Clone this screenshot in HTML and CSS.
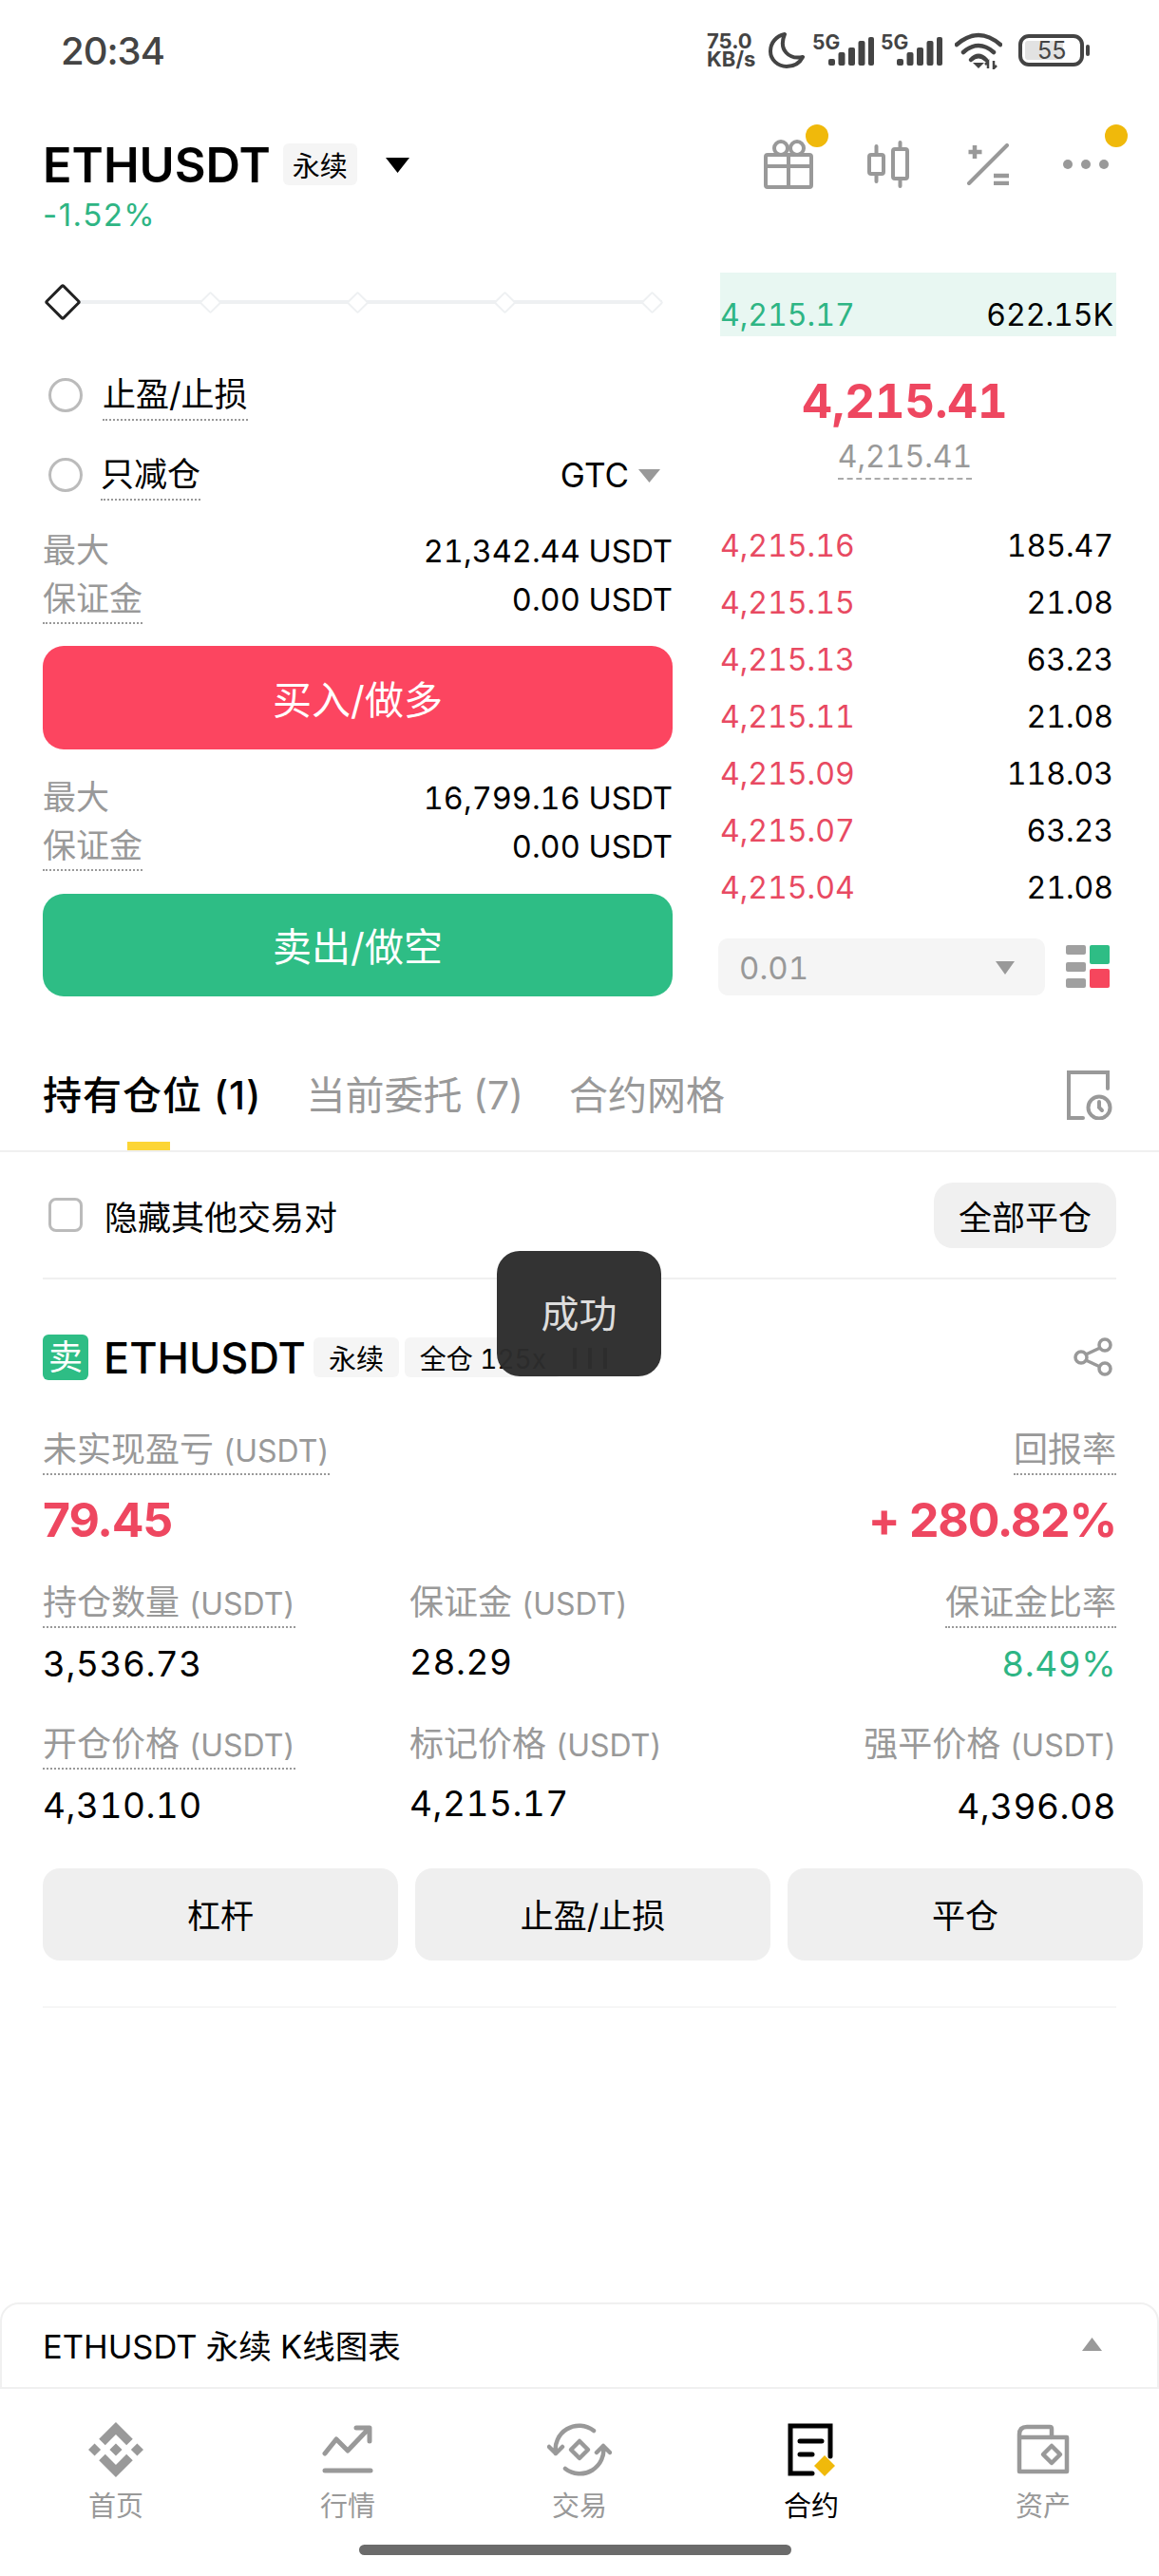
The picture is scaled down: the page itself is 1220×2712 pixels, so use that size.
FILE: index.html
```html
<!DOCTYPE html>
<html lang="zh">
<head>
<meta charset="utf-8">
<title>ETHUSDT 永续</title>
<link rel="stylesheet" href="styles.css">
</head>
<body>
<div class="app">
  <header class="status">
    <span class="clock">20:34</span>
    <div class="sys">
      <div class="speed"><span>75.0</span><span>KB/s</span></div>
      <svg class="moon" width="38" height="40" viewBox="0 0 38 40"><path d="M17 3C8 5 2 12 2 21c0 9 8 16 17 16 8 0 14-4 17-10C22 30 10 20 17 3Z" fill="none" stroke="#444" stroke-width="4" stroke-linejoin="round"/></svg>
      <svg class="sig1" width="66" height="46" viewBox="0 -6 66 46"><text x="0" y="16" class="five">5G</text><g fill="#444"><rect x="17" y="26" width="7" height="7" rx="2"/><rect x="27.500" y="19" width="7" height="14" rx="2"/><rect x="38" y="14" width="7" height="19" rx="2"/><rect x="48.500" y="7" width="7" height="26" rx="2"/><rect x="59" y="3" width="6" height="30" rx="2"/></g></svg>
      <svg class="sig2" width="66" height="46" viewBox="0 -6 66 46"><text x="0" y="16" class="five">5G</text><g fill="#444"><rect x="17" y="26" width="7" height="7" rx="2"/><rect x="27.500" y="19" width="7" height="14" rx="2"/><rect x="38" y="14" width="7" height="19" rx="2"/><rect x="48.500" y="7" width="7" height="26" rx="2"/><rect x="59" y="3" width="6" height="30" rx="2"/></g></svg>
      <svg class="wifi" width="50" height="40" viewBox="0 0 50 40"><g fill="none" stroke="#444" stroke-width="4.500" stroke-linecap="round"><path d="M2 14Q25-6 48 14"/><path d="M9 22Q25 8 41 22"/><path d="M17 30Q25 22 33 30"/></g><path d="M19 33h12l-6 6z" fill="#444"/><path d="M35 39v-7l-3 3M41 31v8l3-3" fill="none" stroke="#444" stroke-width="2.500"/></svg>
      <svg class="batt" width="76" height="34" viewBox="0 0 76 34"><rect x="2" y="2" width="65" height="30" rx="9" fill="#fff" stroke="#444" stroke-width="4"/><rect x="7" y="7" width="40" height="20" rx="3" fill="#e2e2e2"/><rect x="71" y="11" width="4" height="12" rx="2" fill="#444"/><text x="20" y="26" class="pct">55</text></svg>
    </div>
  </header>

  <section class="head">
    <div class="head-left">
      <div class="title-row">
        <span class="pair">ETHUSDT</span>
        <span class="tag tag-head">永续</span>
        <svg class="caret-black" width="27" height="17" viewBox="0 0 27 17"><path d="M1 1h25L13.500 17z" fill="#000"/></svg>
      </div>
      <div class="change">-1.52%</div>
    </div>
    <div class="tools">
      <div class="tool tool-gift">
        <svg width="52" height="52" viewBox="0 0 52 52" fill="none" stroke="#999" stroke-width="4"><rect x="2" y="16" width="48" height="34" rx="2"/><path d="M2 28h48M26 16v34"/><circle cx="18" cy="9" r="7"/><circle cx="35" cy="9" r="7"/></svg>
        <span class="badge"></span>
      </div>
      <div class="tool tool-candle">
        <svg width="44" height="50" viewBox="0 0 44 50" fill="none" stroke="#999" stroke-width="4" stroke-linecap="round"><rect x="2" y="15" width="15" height="20" rx="2"/><path d="M9.500 6v9M9.500 35v8"/><rect x="27" y="9" width="15" height="31" rx="2"/><path d="M34.500 2v7M34.500 40v8"/></svg>
      </div>
      <div class="tool tool-calc">
        <svg width="44" height="44" viewBox="0 0 44 44" fill="none" stroke="#999" stroke-linecap="round"><path d="M2 42L42 2" stroke-width="4"/><path d="M8 2v14M1.500 9h14" stroke-width="4.500" stroke-linecap="butt"/><path d="M28 34h16M28 42h16" stroke-width="4.500" stroke-linecap="butt"/></svg>
      </div>
      <div class="tool tool-more">
        <svg width="50" height="10" viewBox="0 0 50 10" fill="#999"><circle cx="5" cy="5" r="5"/><circle cx="24" cy="5" r="5"/><circle cx="43" cy="5" r="5"/></svg>
        <span class="badge"></span>
      </div>
    </div>
  </section>

  <section class="trade">
    <div class="form">
      <div class="slider">
        <span class="tick"><i class="dia dia-on"></i></span>
        <span class="tick"><i class="dia"></i></span>
        <span class="tick"><i class="dia"></i></span>
        <span class="tick"><i class="dia"></i></span>
        <span class="tick"><i class="dia"></i></span>
      </div>
      <div class="opt opt-tp"><i class="radio"></i><span class="dot-label">止盈/止损</span></div>
      <div class="opt opt-ro"><i class="radio"></i><span class="dot-label dot-tight">只减仓</span>
        <span class="gtc">GTC<svg width="23" height="14" viewBox="0 0 23 14"><path d="M0 0h23L11.500 14z" fill="#999"/></svg></span>
      </div>
      <div class="limits limits-buy">
        <div class="limit"><span class="muted">最大</span><span class="amount">21,342.44 USDT</span></div>
        <div class="limit"><span class="muted under">保证金</span><span class="amount">0.00 USDT</span></div>
      </div>
      <button class="action buy">买入/做多</button>
      <div class="limits limits-sell">
        <div class="limit"><span class="muted">最大</span><span class="amount">16,799.16 USDT</span></div>
        <div class="limit"><span class="muted under">保证金</span><span class="amount">0.00 USDT</span></div>
      </div>
      <button class="action sell">卖出/做空</button>
    </div>

    <div class="book">
      <div class="bid-row"><span class="green">4,215.17</span><span>622.15K</span></div>
      <div class="last">4,215.41</div>
      <div class="mark-wrap"><span class="mark">4,215.41</span></div>
      <div class="asks">
        <div class="ask"><span class="red-soft">4,215.16</span><span>185.47</span></div>
        <div class="ask"><span class="red-soft">4,215.15</span><span>21.08</span></div>
        <div class="ask"><span class="red-soft">4,215.13</span><span>63.23</span></div>
        <div class="ask"><span class="red-soft">4,215.11</span><span>21.08</span></div>
        <div class="ask"><span class="red-soft">4,215.09</span><span>118.03</span></div>
        <div class="ask"><span class="red-soft">4,215.07</span><span>63.23</span></div>
        <div class="ask"><span class="red-soft">4,215.04</span><span>21.08</span></div>
      </div>
      <div class="depth">
        <div class="select"><span>0.01</span><svg width="20" height="14" viewBox="0 0 20 14"><path d="M0 0h20L10 14z" fill="#999"/></svg></div>
        <svg class="layout-ic" width="46" height="46" viewBox="0 0 46 46"><g fill="#a0a0a0"><rect x="0" y="0" width="21" height="10" rx="2"/><rect x="0" y="18" width="21" height="10" rx="2"/><rect x="0" y="35" width="21" height="10" rx="2"/></g><rect x="25" y="0" width="21" height="20" rx="2" fill="#2ebd85"/><rect x="25" y="25" width="21" height="20" rx="2" fill="#f6465d"/></svg>
      </div>
    </div>
  </section>

  <nav class="tabs">
    <span class="tab tab-on">持有仓位 (1)</span>
    <span class="tab">当前委托 (7)</span>
    <span class="tab">合约网格</span>
    <svg class="history" width="48" height="52" viewBox="0 0 48 52" fill="none" stroke="#999" stroke-width="4" stroke-linecap="round"><path d="M43 19V2H2v48h15"/><circle cx="34" cy="39" r="11.500"/><path d="M34 33v6l3 3"/></svg>
  </nav>

  <div class="filter">
    <div class="filter-left"><i class="check"></i><span>隐藏其他交易对</span></div>
    <button class="close-all">全部平仓</button>
  </div>

  <section class="position">
    <div class="pos-head">
      <span class="side">卖</span>
      <span class="pos-pair">ETHUSDT</span>
      <span class="tag">永续</span>
      <span class="tag tag-wide">全仓 125x</span>
      <svg class="adl" width="38" height="24" viewBox="0 0 38 24" fill="#3c3c3c"><rect x="0" y="2" width="4" height="22"/><rect x="16" y="2" width="4" height="22"/><rect x="32" y="2" width="4" height="22"/></svg>
      <svg class="share" width="42" height="42" viewBox="0 0 42 42" fill="none" stroke="#999" stroke-width="3.500"><circle cx="8" cy="21" r="6"/><circle cx="33" cy="8" r="6"/><circle cx="33" cy="33" r="6"/><path d="M13 18L28 11M13 24l15 7"/></svg>
    </div>
    <div class="pnl">
      <div><span class="lab under">未实现盈亏 <small class="unit">(USDT)</small></span></div>
      <div class="right"><span class="lab under">回报率</span></div>
      <div class="pnl-val red">79.45</div>
      <div class="pnl-val red right">+ 280.82%</div>
    </div>
    <div class="metrics">
      <div class="m m-a"><span class="lab under">持仓数量 <small class="unit">(USDT)</small></span><div class="val">3,536.73</div></div>
      <div class="m m-a"><span class="lab plain">保证金 <small class="unit">(USDT)</small></span><div class="val">28.29</div></div>
      <div class="m m-a right"><span class="lab under">保证金比率</span><div class="val green">8.49%</div></div>
      <div class="m m-b"><span class="lab under">开仓价格 <small class="unit">(USDT)</small></span><div class="val">4,310.10</div></div>
      <div class="m m-b"><span class="lab plain">标记价格 <small class="unit">(USDT)</small></span><div class="val">4,215.17</div></div>
      <div class="m m-b right"><span class="lab">强平价格 <small class="unit">(USDT)</small></span><div class="val val-low">4,396.08</div></div>
    </div>
    <div class="pos-actions">
      <button class="pos-btn">杠杆</button>
      <button class="pos-btn">止盈/止损</button>
      <button class="pos-btn">平仓</button>
    </div>
    <div class="pos-end"></div>
  </section>

  <div class="bottom">
    <div class="kline">
      <span>ETHUSDT 永续 K线图表</span>
      <svg width="21" height="14" viewBox="0 0 21 14"><path d="M10.500 0L21 14H0z" fill="#999"/></svg>
    </div>
    <div class="nav">
      <div class="nav-item">
        <span class="nav-ic"><svg width="58" height="58" viewBox="0 0 24 24" fill="#999"><path d="M16.624 13.9202l2.7175 2.7154-7.353 7.353-7.353-7.352 2.7175-2.7164 4.6355 4.6595 4.6356-4.6595zm4.6366-4.6366L24 12l-2.7154 2.7164L18.5682 12l2.6924-2.7164zm-9.272.001l2.7163 2.6914-2.7164 2.7174v-.001L9.2721 12l2.7164-2.7154zm-9.2722-.001L5.4088 12l-2.6914 2.6924L0 12l2.7164-2.7164zM11.9885.0115l7.353 7.329-2.7174 2.7154-4.6356-4.6356-4.6355 4.6595-2.7174-2.7154 7.353-7.353z"/></svg></span>
        <span>首页</span>
      </div>
      <div class="nav-item">
        <span class="nav-ic"><svg width="54" height="52" viewBox="0 0 54 52" fill="none" stroke="#999" stroke-width="5" stroke-linecap="round" stroke-linejoin="round"><path d="M3 30L15 15l12 12L48 5M36 3h14v14"/><path d="M3 48h48"/></svg></span>
        <span>行情</span>
      </div>
      <div class="nav-item">
        <span class="nav-ic"><svg width="68" height="56" viewBox="0 0 68 56" fill="none" stroke="#999" stroke-width="4.500" stroke-linecap="round" stroke-linejoin="round"><path d="M9 32A25 25 0 0 1 49 8M2 25l7 7 7-7"/><path d="M59 24A25 25 0 0 1 19 48M52 31l7-7 7 7"/><path d="M34 19l9 9-9 9-9-9z"/></svg></span>
        <span>交易</span>
      </div>
      <div class="nav-item nav-on">
        <span class="nav-ic"><svg width="50" height="56" viewBox="0 0 50 56" fill="none" stroke="#000" stroke-width="5" stroke-linecap="round"><path d="M45 35V3H3v50h23"/><path d="M13 19h23M13 33h13"/><path d="M39 34l11 11-11 11-11-11z" fill="#f0b90b" stroke="none"/></svg></span>
        <span>合约</span>
      </div>
      <div class="nav-item">
        <span class="nav-ic"><svg width="56" height="54" viewBox="0 0 56 54" fill="none" stroke="#999" stroke-width="4.500" stroke-linejoin="round"><path d="M3 50V11Q3 3 11 3h24q2 0 2 2v9h16v36z"/><path d="M3 14h34"/><path d="M37 23l9 9-9 9-9-9z"/></svg></span>
        <span>资产</span>
      </div>
    </div>
    <div class="home-bar"></div>
  </div>

  <div class="toast">成功</div>
</div>
</body>
</html>
```

FILE: styles.css
```css
* { box-sizing: border-box; }
html, body { margin: 0; padding: 0; background: #fff; }
body { font-family: Inter, "Noto Sans CJK SC", sans-serif; color: #000; font-variant-numeric: tabular-nums; }
button { font: inherit; border: 0; padding: 0; }
i { display: block; }
.app { position: relative; width: 1220px; height: 2712px; overflow: hidden; display: flex; flex-direction: column; background: #fff; }
.green { color: #2eb584; }
.red { color: #ee4760; }
.red-soft { color: #e84a62; }
.right { text-align: right; }

/* status bar */
.status { height: 106px; display: flex; align-items: center; padding: 0 72px 0 64px; justify-content: space-between; flex: none; }
.clock { font-size: 40px; font-weight: 500; color: #444; letter-spacing: -1px; font-variant-numeric: normal; }
.sys { display: flex; align-items: center; color: #444; }
.speed { display: flex; flex-direction: column; font-weight: 700; font-size: 22px; line-height: 19px; width: 55px; font-variant-numeric: normal; }
.moon { margin-left: 10px; }
.sig1 { margin-left: 8px; }
.sig2 { margin-left: 6px; }
.wifi { margin-left: 12px; }
.batt { margin-left: 17px; }
.five { font: 700 21px Inter, sans-serif; fill: #444; }
.pct { font: 400 25px Inter, sans-serif; fill: #444; }

/* header */
.head { flex: none; height: 141px; padding: 35px 51px 0 45px; display: flex; justify-content: space-between; }
.title-row { height: 64px; display: flex; align-items: center; }
.pair { font-size: 50.5px; font-weight: 600; }
.tag { display: inline-flex; align-items: center; justify-content: center; height: 42px; width: 90px; background: #f5f5f5; border-radius: 6px; font-size: 29px; margin-left: 8px; flex: none; }
.tag-head { width: 78px; height: 44px; margin-left: 13px; }
.caret-black { margin-left: 29px; }
.change { height: 42px; line-height: 42px; font-size: 33px; color: #2eb584; font-variant-numeric: normal; letter-spacing: 1.5px; }
.tools { display: flex; align-items: center; height: 64px; }
.tool { position: relative; display: flex; align-items: center; }
.tool-candle { margin-left: 57px; }
.tool-calc { margin-left: 61px; }
.tool-more { margin-left: 57px; }
.badge { position: absolute; width: 24px; height: 24px; border-radius: 50%; background: #f0b90b; }
.tool-gift .badge { left: 44px; top: -16px; }
.tool-more .badge { left: 44px; top: -37px; }

/* trade */
.trade { flex: none; margin-top: 40px; padding: 0 45px; display: grid; grid-template-columns: 663px 417px; column-gap: 50px; }
.form { display: flex; flex-direction: column; }
.slider { height: 62px; display: flex; justify-content: space-between; align-items: center; padding: 0 11px 0 10px; background: linear-gradient(#eef0f2, #eef0f2) center / 100% 4px no-repeat; background-origin: content-box; background-clip: content-box; }
.tick { width: 22px; display: flex; justify-content: center; align-items: center; }
.dia { flex: none; width: 17px; height: 17px; transform: rotate(45deg); background: #fff; border: 2px solid #eef0f2; border-radius: 2px; }
.dia-on { width: 28px; height: 28px; border: 3px solid #222; border-radius: 3px; }
.opt { display: flex; align-items: flex-start; height: 53px; font-size: 35px; }
.opt-tp { margin-top: 41px; }
.opt-ro { margin-top: 31px; }
.radio { flex: none; width: 36px; height: 36px; margin: 8px 0 0 6px; border: 3px solid #bbb; border-radius: 50%; }
.dot-label { margin-left: 21px; height: 53px; line-height: 51px; border-bottom: 2px dotted #999; }
.dot-tight { margin-left: 19px; }
.gtc { margin-left: auto; margin-right: 13px; display: flex; align-items: center; gap: 10px; font-size: 35px; line-height: 53px; }
.limits { display: flex; flex-direction: column; }
.limits-buy { margin-top: 27px; }
.limits-sell { margin-top: 25px; }
.limit { display: flex; justify-content: space-between; align-items: flex-start; height: 51px; line-height: 50px; font-size: 32.500px; }
.amount { margin-top: 2px; }
.muted { color: #999; font-size: 35px; }
.under { border-bottom: 2px dotted #999; display: inline-block; }
.muted.under { height: 52px; }
.action { display: block; width: 100%; height: 108px; padding-bottom: 2px; border-radius: 22px; color: #fff; font-size: 41px; }
.buy { margin-top: 24px; height: 109px; background: #fc4560; }
.sell { margin-top: 25px; background: #2ebd85; }

/* order book */
.book { display: flex; flex-direction: column; font-size: 32px; }
.bid-row { height: 67px; background: #e8f7f2; display: flex; justify-content: space-between; align-items: flex-end; line-height: 44px; padding: 0 3px 0 0; }
.last { margin-top: 39px; height: 60px; line-height: 60px; text-align: center; font-size: 49px; font-weight: 700; color: #ee4760; margin-right: 28px; }
.mark-wrap { margin-top: 6px; text-align: center; margin-right: 28px; height: 46px; }
.mark { display: inline-block; height: 46px; line-height: 44px; color: #999; border-bottom: 2px dashed #aaa; }
.asks { margin-top: 38px; }
.ask { height: 60px; padding-top: 2px; line-height: 60px; display: flex; justify-content: space-between; padding-right: 3px; }
.depth { margin-top: 25px; display: flex; align-items: center; margin-left: -2px; }
.select { width: 344px; height: 60px; background: #f5f5f5; border-radius: 10px; display: flex; align-items: center; justify-content: space-between; padding: 2px 32px 0 22px; color: #999; font-size: 33px; }
.layout-ic { margin-left: 22px; }

/* tabs */
.tabs { flex: none; margin-top: 46px; height: 118px; border-bottom: 2px solid #f0f0f0; display: flex; padding: 0 49px 0 45px; align-items: center; }
.tab { position: relative; height: 116px; line-height: 116px; font-size: 41px; font-variant-numeric: normal; color: #999; margin-right: 48px; white-space: nowrap; }
.tab-on { color: #000; font-weight: 500; letter-spacing: 1px; margin-right: 47px; }
.tab-on::after { content: ""; position: absolute; left: 89px; bottom: 0; width: 45px; height: 9px; background: #fcd535; }
.history { margin-left: auto; }

/* filter */
.filter { flex: none; height: 134px; margin: 0 45px; border-bottom: 2px solid #f0f0f0; display: flex; align-items: center; justify-content: space-between; font-size: 35px; }
.filter-left { display: flex; align-items: center; }
.check { width: 36px; height: 36px; margin: 0 23px 0 6px; border: 3px solid #bbb; border-radius: 8px; }
.close-all { width: 192px; height: 69px; border-radius: 20px; background: #f0f0f0; font-size: 35px; }

/* position */
.position { flex: none; padding: 0 45px; }
.pos-head { margin-top: 58px; height: 48px; display: flex; align-items: center; }
.side { flex: none; width: 48px; height: 48px; border-radius: 6px; background: #2ebd85; color: #fff; font-size: 36px; line-height: 48px; text-align: center; }
.pos-pair { margin-left: 16px; font-size: 45px; font-weight: 500; }
.pos-head .tag { height: 42px; }
.tag-wide { width: 165px; margin-left: 6px; font-size: 28px; }
.adl { margin-left: 12px; }
.share { margin-left: auto; margin-right: 3px; }
.pnl { display: grid; grid-template-columns: 1fr 1fr; margin-top: 48px; }
.lab { display: inline-block; color: #999; font-size: 36px; height: 52px; line-height: 50px; white-space: nowrap; }
.lab.plain { height: 50px; }
.unit { font-size: 32px; }
.pnl-val { font-size: 50px; font-weight: 700; height: 60px; line-height: 60px; margin-top: 17px; letter-spacing: -1.2px; font-variant-numeric: normal; }
.metrics { display: grid; grid-template-columns: 386px 1fr auto; }
.m { display: flex; flex-direction: column; align-items: flex-start; }
.m.right { align-items: flex-end; }
.m-a { margin-top: 32px; }
.m-b { margin-top: 36px; }
.val { font-size: 37px; letter-spacing: .5px; height: 46px; line-height: 46px; margin-top: 15px; }
.val-low { margin-top: 16px; }
.pos-actions { display: grid; grid-template-columns: repeat(3, 374px); column-gap: 18px; margin-top: 42px; width: 1158px; }
.pos-btn { height: 97px; padding-bottom: 2px; border-radius: 18px; background: #efefef; font-size: 35px; color: #000; }
.pos-end { margin-top: 48px; height: 2px; background: #f6f6f6; }

/* bottom */
.bottom { margin-top: auto; flex: none; }
.kline { height: 91px; padding: 0 58px 4px 43px; border: 2px solid #f0f0f0; border-radius: 20px 20px 0 0; display: flex; align-items: center; justify-content: space-between; font-size: 34.500px; }
.nav { display: grid; grid-template-columns: repeat(5, 244px); padding-top: 35px; }
.nav-item { display: flex; flex-direction: column; align-items: center; font-size: 29px; color: #999; line-height: 36px; }
.nav-on { color: #000; }
.nav-ic { height: 58px; margin-bottom: 13px; display: flex; align-items: center; justify-content: center; }
.home-bar { width: 455px; height: 11px; margin: 22px 0 22px 378px; border-radius: 6px; background: #6b6b6b; }

/* toast */
.toast { position: absolute; left: 523px; top: 1317px; width: 173px; height: 132px; padding-bottom: 5px; border-radius: 24px; background: rgba(44, 44, 44, .97); color: #ddd; font-size: 40px; display: flex; align-items: center; justify-content: center; }
```
